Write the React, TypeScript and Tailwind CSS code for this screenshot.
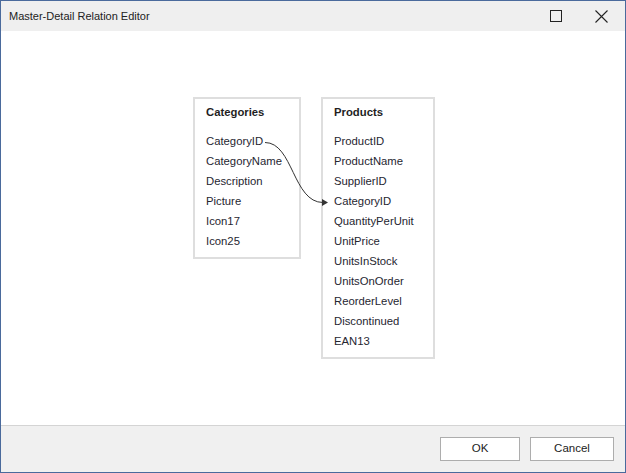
import React from "react"

const categories = ["CategoryID", "CategoryName", "Description", "Picture", "Icon17", "Icon25"]
const products = [
    "ProductID",
    "ProductName",
    "SupplierID",
    "CategoryID",
    "QuantityPerUnit",
    "UnitPrice",
    "UnitsInStock",
    "UnitsOnOrder",
    "ReorderLevel",
    "Discontinued",
    "EAN13",
]

function TableBox({ title, fields, width }: { title: string; fields: string[]; width: string }) {
    return (
        <div className={`${width} border-2 border-[#dedede] bg-white pl-[11px] pt-[3px] pb-[6px]`}>
            <div className="h-[20px] leading-[20px] font-bold text-[#1f1f1f]">{title}</div>
            <div className="mt-[9px] flex flex-col">
                {fields.map((f) => (
                    <div key={f} className="h-[20px] leading-[20px] text-[#262631]">
                        {f}
                    </div>
                ))}
            </div>
        </div>
    )
}

export default function App() {
    return (
        <div
            className="relative w-[626px] h-[473px] flex flex-col border border-[#4a6a9c] bg-white text-[11.3px]"
            style={{ fontFamily: '"Liberation Sans", Arial, sans-serif' }}
        >
            {/* Title bar */}
            <div className="h-[30px] bg-[#efefef] flex items-center justify-between pl-[8px]">
                <span className="text-[11px] text-[#222]">Master-Detail Relation Editor</span>
                <div className="flex items-center h-full pr-[1px]">
                    <button className="w-[44px] h-full flex items-center justify-center">
                        <svg width="12" height="12" viewBox="0 0 12 12">
                            <rect x="0.5" y="0.5" width="11" height="11" fill="none" stroke="#222" strokeWidth="1" />
                        </svg>
                    </button>
                    <button className="w-[46px] h-full flex items-center justify-center">
                        <svg width="13" height="13" viewBox="0 0 13 13">
                            <path d="M0.5 0.5 L12.5 12.5 M12.5 0.5 L0.5 12.5" stroke="#222" strokeWidth="1.1" fill="none" />
                        </svg>
                    </button>
                </div>
            </div>

            {/* Diagram area */}
            <div className="flex-1 bg-white flex items-start gap-[20px] pt-[66px] pl-[192px]">
                <TableBox title="Categories" fields={categories} width="w-[108px]" />
                <TableBox title="Products" fields={products} width="w-[114px]" />
            </div>

            {/* Footer */}
            <div className="h-[47px] bg-[#f0f0f0] border-t border-[#d4d4d4] flex items-start justify-end gap-[10px] pt-[11px] pr-[11px]">
                <button className="w-[80px] h-[24px] bg-white border border-[#adadad] text-[#222] text-[11.5px]">OK</button>
                <button className="w-[84px] h-[24px] bg-white border border-[#adadad] text-[#222] text-[11.5px]">Cancel</button>
            </div>

            {/* Relation connector */}
            <svg className="absolute left-0 top-0 pointer-events-none" width="626" height="473">
                <path d="M264 141.5 C 292 141.5, 292 201.5, 322 201.5" stroke="#333" strokeWidth="1" fill="none" />
                <path d="M321 198 L327 201.5 L321 205 Z" fill="#333" />
            </svg>
        </div>
    )
}
